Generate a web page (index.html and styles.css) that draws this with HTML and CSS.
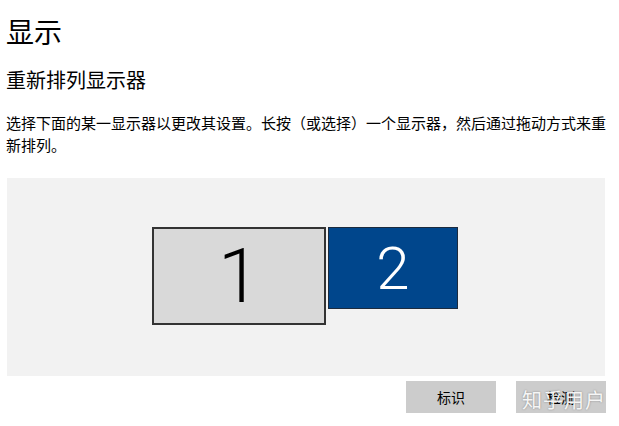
FILE: index.html
```html
<!DOCTYPE html>
<html lang="zh-CN">
<head>
<meta charset="utf-8">
<link rel="stylesheet" href="styles.css">
</head>
<body>
<div class="page">
  <h1 class="title">显示</h1>
  <h2 class="subtitle">重新排列显示器</h2>
  <p class="desc">选择下面的某一显示器以更改其设置。长按（或选择）一个显示器，然后通过拖动方式来重新排列。</p>
  <div class="canvas">
    <div class="monitor monitor-1">1</div>
    <div class="monitor monitor-2">2</div>
  </div>
  <div class="actions">
    <button class="btn">标识</button>
    <button class="btn">检测</button>
  </div>
  <div class="watermark">知乎用户</div>
</div>
</body>
</html>
```
FILE: styles.css
```css
html, body {
  margin: 0;
  padding: 0;
  background: #ffffff;
  overflow: hidden;
}
.page {
  position: relative;
  width: 619px;
  height: 426px;
  padding: 17px 0 0 6px;
  box-sizing: border-box;
  font-family: "Noto Sans CJK SC", "Noto Sans", sans-serif;
  color: #000;
}
.title {
  margin: 0;
  font-size: 28px;
  line-height: 29px;
  font-weight: 400;
}
.subtitle {
  margin: 24px 0 0 0;
  font-size: 20px;
  line-height: 20px;
  font-weight: 400;
}
.desc {
  margin: 22px 0 0 0;
  width: 604px;
  font-size: 15px;
  line-height: 22px;
  color: #000;
}
.canvas {
  position: relative;
  margin-top: 22px;
  margin-left: 1px;
  width: 598px;
  height: 198px;
  background: #f2f2f2;
}
.monitor {
  position: absolute;
  box-sizing: border-box;
  display: flex;
  align-items: center;
  justify-content: center;
  font-family: "Roboto", "Liberation Sans", sans-serif;
  font-weight: 300;
}
.monitor-1 {
  left: 145px;
  top: 49px;
  width: 174px;
  height: 98px;
  border: 2px solid #333333;
  background: #d9d9d9;
  color: #000;
  font-size: 76px;
}
.monitor-2 {
  left: 321px;
  top: 49px;
  width: 130px;
  height: 82px;
  border: 1px solid #1c2b3e;
  background: #00468c;
  color: #ffffff;
  font-size: 60px;
}
.actions {
  display: flex;
  justify-content: flex-end;
  gap: 20px;
  width: 600px;
  margin-top: 5px;
}
.btn {
  width: 90px;
  height: 32px;
  border: none;
  background: #cccccc;
  font-family: "Noto Sans CJK SC", sans-serif;
  font-size: 14px;
  color: #000;
  padding: 0;
}
.watermark {
  position: absolute;
  left: 522px;
  top: 386px;
  font-size: 20px;
  line-height: 28px;
  letter-spacing: 1px;
  color: rgba(255, 255, 255, 0.92);
  text-shadow: 0 0 2px rgba(0, 0, 0, 0.35);
}
```
